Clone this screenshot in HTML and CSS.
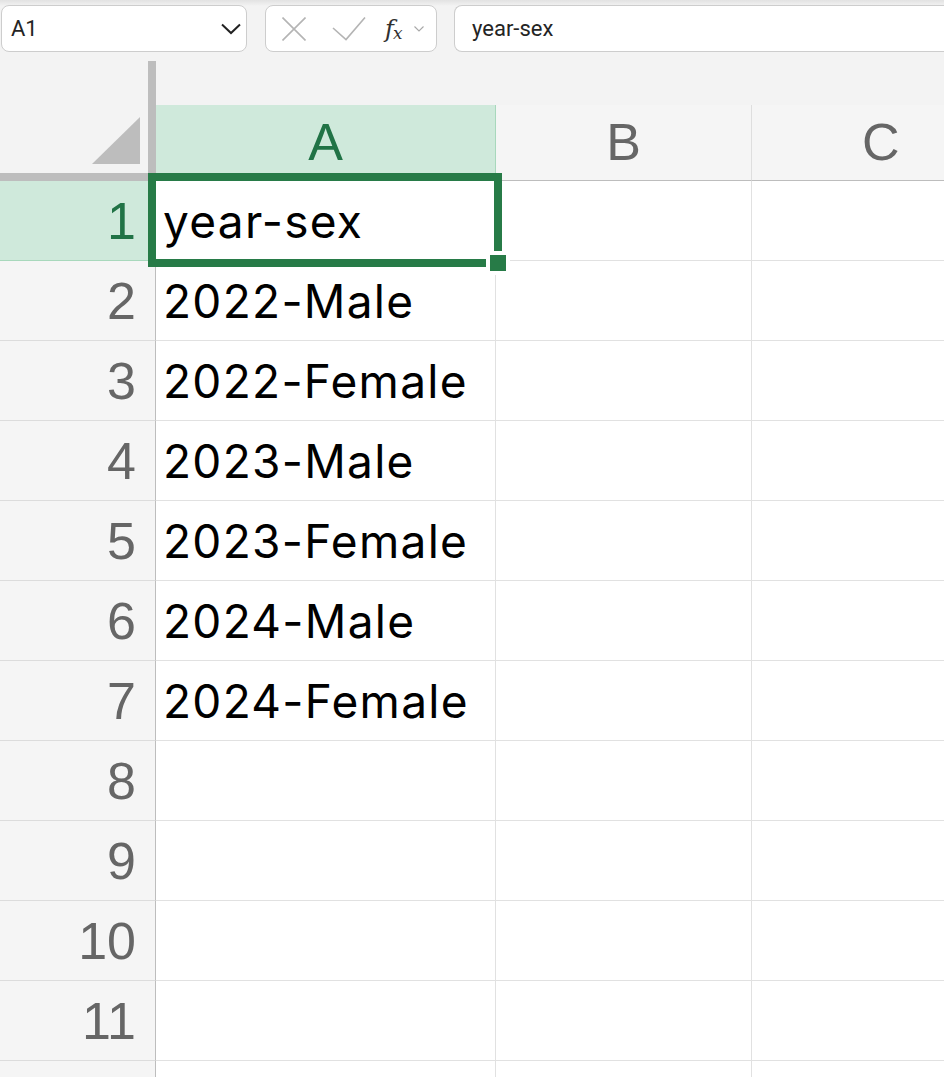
FILE: index.html
```html
<!DOCTYPE html>
<html lang="en">
<head>
<meta charset="utf-8">
<title>Sheet</title>
<link rel="stylesheet" href="styles.css">
</head>
<body>
<div class="toolbar">
  <div class="namebox">
    <span class="nb-text">A1</span>
    <svg class="nb-chev" width="20" height="12" viewBox="0 0 20 12"><polyline points="1,1.5 10,10 19,1.5" fill="none" stroke="#222" stroke-width="2"/></svg>
  </div>
  <div class="fbtns">
    <svg class="ic-x" width="24" height="24" viewBox="0 0 24 24"><path d="M0.5 0.5 L23.5 23.5 M23.5 0.5 L0.5 23.5" stroke="#b4b4b4" stroke-width="1.6" fill="none"/></svg>
    <svg class="ic-check" width="34" height="24" viewBox="0 0 34 24"><polyline points="1,11 14,22.5 33,0.5" fill="none" stroke="#b4b4b4" stroke-width="1.6"/></svg>
    <span class="fx"><span class="fx-f">f</span><span class="fx-x">x</span></span>
    <svg class="ic-small" width="10" height="6" viewBox="0 0 10 6"><polyline points="0.5,0.5 5,5 9.5,0.5" fill="none" stroke="#a8a8a8" stroke-width="1.1"/></svg>
  </div>
  <div class="formula"><span class="f-text">year-sex</span></div>
</div>

<div class="sheet">
  <div class="corner"><div class="tri"></div></div>
  <div class="colhead sel">A</div>
  <div class="colhead">B</div>
  <div class="colhead last">C</div>

  <div class="rowhead sel">1</div>
  <div class="cell a1">year-sex<div class="selbox"><div class="handle"></div></div></div>
  <div class="cell"></div>
  <div class="cell last"></div>

  <div class="rowhead">2</div><div class="cell">2022-Male</div><div class="cell"></div><div class="cell last"></div>
  <div class="rowhead">3</div><div class="cell">2022-Female</div><div class="cell"></div><div class="cell last"></div>
  <div class="rowhead">4</div><div class="cell">2023-Male</div><div class="cell"></div><div class="cell last"></div>
  <div class="rowhead">5</div><div class="cell">2023-Female</div><div class="cell"></div><div class="cell last"></div>
  <div class="rowhead">6</div><div class="cell">2024-Male</div><div class="cell"></div><div class="cell last"></div>
  <div class="rowhead">7</div><div class="cell">2024-Female</div><div class="cell"></div><div class="cell last"></div>
  <div class="rowhead">8</div><div class="cell"></div><div class="cell"></div><div class="cell last"></div>
  <div class="rowhead">9</div><div class="cell"></div><div class="cell"></div><div class="cell last"></div>
  <div class="rowhead">10</div><div class="cell"></div><div class="cell"></div><div class="cell last"></div>
  <div class="rowhead">11</div><div class="cell"></div><div class="cell"></div><div class="cell last"></div>
  <div class="rowhead"></div><div class="cell"></div><div class="cell"></div><div class="cell last"></div>
</div>
</body>
</html>
```

FILE: styles.css
```css
* { box-sizing: border-box; }
html, body { margin: 0; padding: 0; }
body {
  width: 944px;
  height: 1077px;
  overflow: hidden;
  background: #f3f3f3;
  font-family: Roboto, "Liberation Sans", Arial, sans-serif;
}

/* ---------- toolbar ---------- */
.toolbar {
  height: 61px;
  display: flex;
  align-items: flex-start;
  padding: 5px 0 0 1px;
  background: linear-gradient(#e2e2e2 0, #f3f3f3 6px);
  white-space: nowrap;
}
.namebox, .fbtns, .formula {
  height: 47px;
  background: #fff;
  border: 1px solid #cdcdcd;
  border-radius: 8px;
  display: flex;
  align-items: center;
  flex-shrink: 0;
}
.namebox {
  width: 246px;
  padding: 0 0 0 9px;
  justify-content: space-between;
}
.nb-text {
  font-size: 22px;
  color: #242424;
}
.nb-chev { margin-right: 5px; }
.fbtns {
  width: 172px;
  margin-left: 18px;
  padding-left: 16px;
}
.ic-check { margin-left: 26px; }
.fx {
  margin-left: 19px;
  font-family: "DejaVu Serif", "Liberation Serif", serif;
  font-style: italic;
  color: #303030;
  display: flex;
  align-items: flex-end;
  height: 24px;
}
.fx-f { font-size: 24px; line-height: 24px; }
.fx-x { font-size: 17px; line-height: 16px; margin-left: -1px; }
.ic-small { margin-left: 12px; }
.formula {
  flex: 1;
  flex-shrink: 1;
  margin-left: 17px;
  padding-left: 17px;
  border-right: none;
  border-radius: 8px 0 0 8px;
}
.f-text {
  font-size: 22px;
  color: #242424;
}

/* ---------- sheet ---------- */
.sheet {
  display: grid;
  grid-template-columns: 156px 340px 256px 192px;
  grid-auto-rows: 80px;
  grid-template-rows: 120px;
  height: 1016px;
  overflow: hidden;
}
.corner {
  background: #f3f3f3;
  border-right: 8px solid #bdbdbd;
  border-bottom: 8px solid #bdbdbd;
  display: flex;
  justify-content: flex-end;
  align-items: flex-end;
  padding: 0 8px 9px 0;
}
.tri {
  width: 48px;
  height: 47px;
  background: #bdbdbd;
  clip-path: polygon(100% 0, 100% 100%, 0 100%);
}
.colhead {
  align-self: end;
  height: 76px;
  background: #f5f5f5;
  border-right: 1px solid #dedede;
  border-bottom: 1px solid #bdbdbd;
  display: flex;
  align-items: center;
  justify-content: center;
  font-family: "Liberation Sans", Arial, sans-serif;
  font-size: 52px;
  color: #666;
  padding-bottom: 2px;
}
.colhead.last {
  border-right: none;
  justify-content: flex-start;
  padding-left: 110px;
}
.colhead.sel {
  background: #cfe9db;
  color: #217346;
  border-right-color: #a8d8bc;
}
.rowhead {
  background: #f5f5f5;
  border-right: 1px solid #bdbdbd;
  border-bottom: 1px solid #dcdcdc;
  display: flex;
  align-items: center;
  justify-content: flex-end;
  padding-right: 19px;
  font-family: "Liberation Sans", Arial, sans-serif;
  font-size: 52px;
  color: #666;
}
.rowhead.sel {
  background: #cfe9db;
  color: #217346;
  border-bottom-color: #a8d8bc;
}
.cell {
  background: #fff;
  border-right: 1px solid #e1e1e1;
  border-bottom: 1px solid #e1e1e1;
  display: flex;
  align-items: center;
  padding-left: 7px;
  font-family: Inter, "Liberation Sans", sans-serif;
  font-size: 46px;
  letter-spacing: 1.3px;
  color: #000;
  white-space: nowrap;
}
.cell.last { border-right: none; }
.a1 { position: relative; }
.selbox {
  position: absolute;
  left: -8px;
  top: -8px;
  width: 354px;
  height: 94px;
  border: 8px solid #277b47;
}
.handle {
  position: absolute;
  left: 330px;
  top: 70px;
  width: 24px;
  height: 24px;
  background: #277b47;
  border: 4px solid #fff;
}
```
